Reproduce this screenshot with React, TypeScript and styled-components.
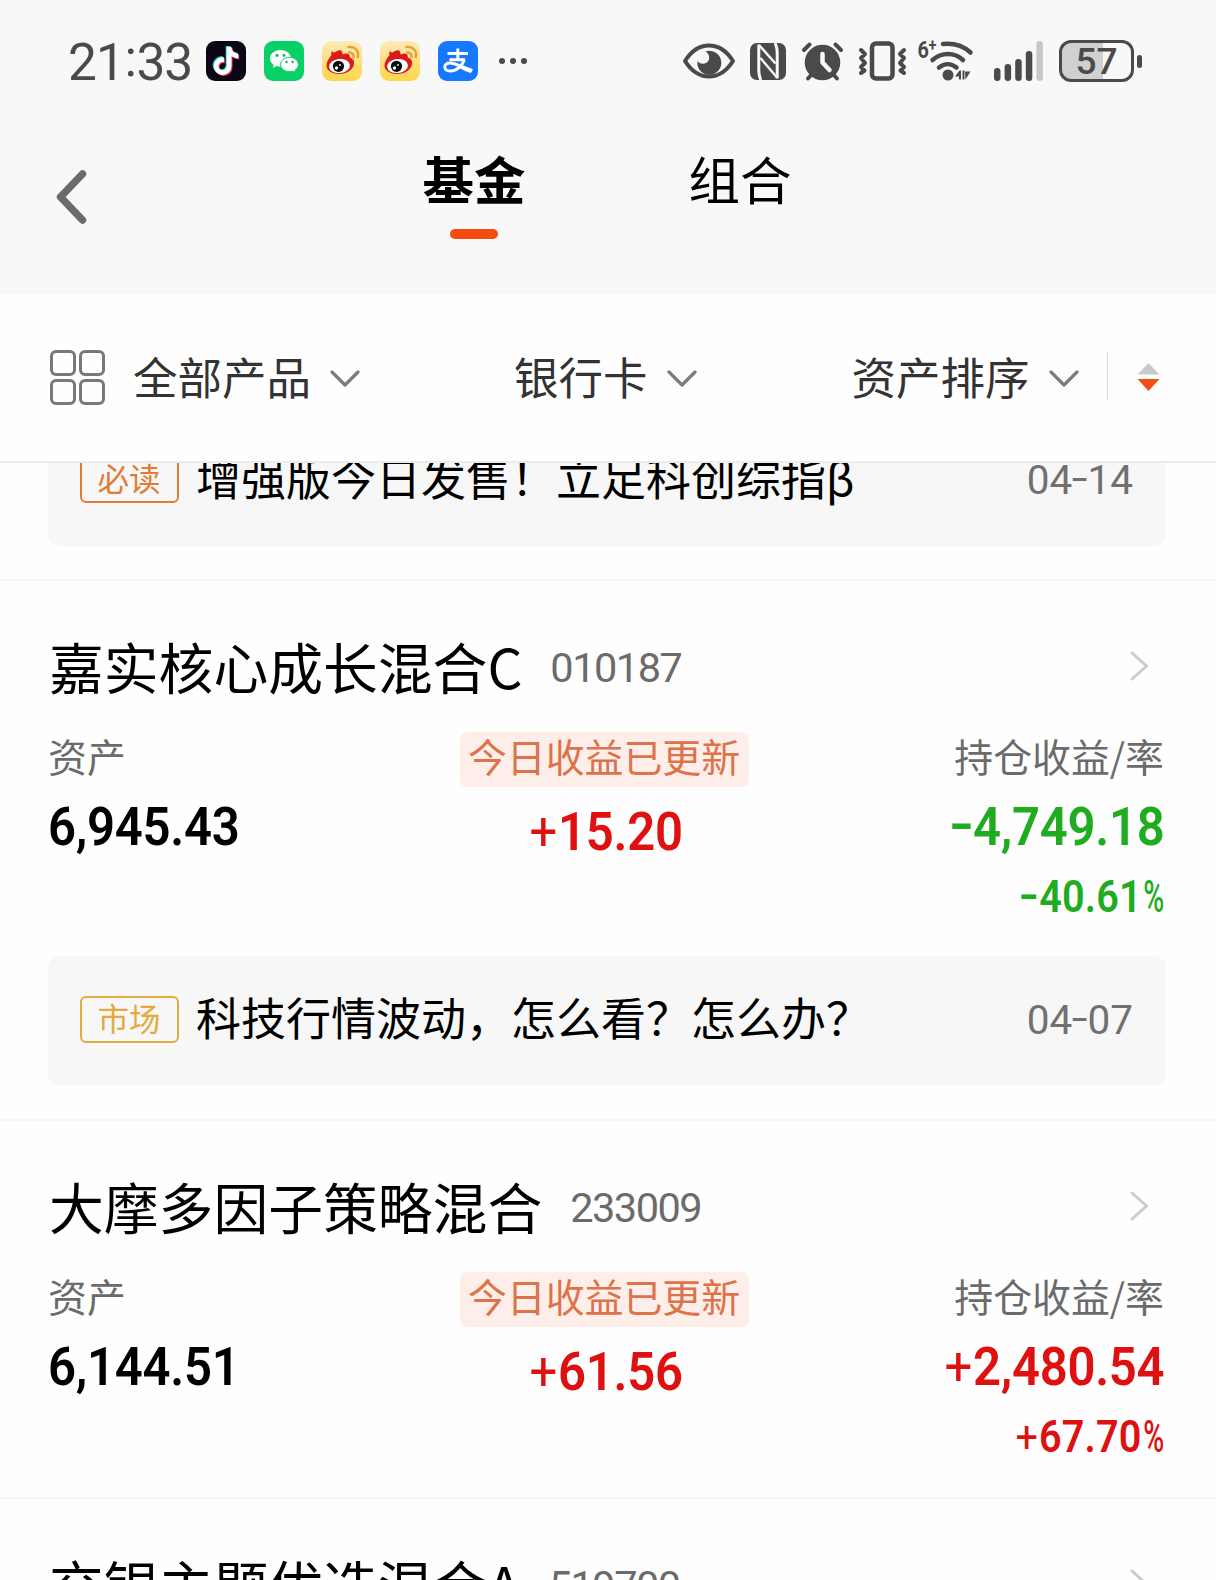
import React from 'react';
import styled, { createGlobalStyle } from 'styled-components';
import { FaTiktok } from 'react-icons/fa';

const CJK = `"Noto Sans CJK SC", sans-serif`;
const NUM = `Roboto, "Noto Sans CJK SC", sans-serif`;

const GlobalStyle = createGlobalStyle`
  * { box-sizing: border-box; }
  body { margin: 0; background: #fff; font-family: ${CJK}; }
`;

const Page = styled.div`
  width: 1216px;
  height: 1580px;
  overflow: hidden;
  background: #fefefe;
  display: flex;
  flex-direction: column;
`;

/* ---------- header ---------- */

const Header = styled.header`
  flex: none;
  height: 294px;
  background: #f8f8f8;
`;

const StatusBar = styled.div`
  height: 122px;
  padding: 0 74px 0 68px;
  display: flex;
  align-items: center;
  justify-content: space-between;
`;

const StatusGroup = styled.div`
  display: flex;
  align-items: center;
`;

const Clock = styled.div`
  width: 138px;
  font: 400 51.5px/60px ${NUM};
  letter-spacing: -1px;
  color: #4a4a4a;
  white-space: nowrap;
  padding-top: 3px;
`;

const Colon = styled.span`
  display: inline-block;
  transform: translateY(-4px);
  margin: 0 0.5px;
`;

const AppIcon = styled.div<{ $bg: string }>`
  width: 40px;
  height: 40px;
  margin-right: 18px;
  border-radius: 9px;
  background: ${(p) => p.$bg};
  display: grid;
  place-items: center;
  svg { grid-area: 1 / 1; display: block; }
`;

const Note = styled(FaTiktok)<{ $dx: number; $dy: number; $c: string }>`
  color: ${(p) => p.$c};
  transform: translate(${(p) => p.$dx}px, ${(p) => p.$dy}px);
`;

const Dots = styled.div`
  display: flex;
  gap: 5px;
  margin-left: 3px;
  i { width: 6px; height: 6px; border-radius: 50%; background: #4a4a4a; }
`;

const StatusIcon = styled.svg<{ $gap: number }>`
  display: block;
  flex: none;
  overflow: visible;
  margin-right: ${(p) => p.$gap}px;
`;

const Battery = styled.div`
  width: 75px;
  height: 42px;
  border: 3px solid #4a4a4a;
  border-radius: 12px;
  background: linear-gradient(90deg, #d0d0d0 0 41px, #f8f8f8 41px);
  font: 500 37px/38px ${NUM};
  color: #4a4a4a;
  text-align: center;
`;

const BatteryCap = styled.div`
  width: 5px;
  height: 13px;
  margin-left: 3px;
  border-radius: 3px;
  background: #4a4a4a;
`;

const NavBar = styled.nav`
  height: 172px;
  display: grid;
  grid-template-columns: 346px auto 1fr;
  padding: 20px 0 0 56px;
`;

const BackIcon = styled.svg`
  display: block;
  margin-top: 27px;
`;

const Tabs = styled.div`
  display: flex;
  gap: 162px;
  padding-left: 20px;
`;

const Tab = styled.div<{ $active?: boolean }>`
  width: 104px;
  height: 100px;
  font: ${(p) => (p.$active ? 700 : 400)} 51.5px/72px ${CJK};
  color: #000;
  text-align: center;
  white-space: nowrap;
  display: flex;
  flex-direction: column;
  align-items: center;
  &::after {
    content: '';
    width: 48px;
    height: 10px;
    margin-top: 15px;
    border-radius: 5px;
    background: ${(p) => (p.$active ? '#f44b0e' : 'transparent')};
  }
`;

/* ---------- filters ---------- */

const FilterBar = styled.div`
  flex: none;
  height: 169px;
  background: #fefefe;
  border-bottom: 2px solid #ececec;
  padding: 0 56px 0 50px;
  display: flex;
  align-items: center;
  z-index: 1;
`;

const FilterItem = styled.div<{ $gap: number }>`
  display: flex;
  align-items: center;
  margin-right: ${(p) => p.$gap}px;
`;

const FilterLabel = styled.span`
  font: 400 44.5px/60px ${CJK};
  color: #333;
  white-space: nowrap;
  margin: -3px 19px 0 0;
`;

const GridIcon = styled.div`
  display: grid;
  grid-template-columns: 26px 26px;
  grid-auto-rows: 26px;
  gap: 3px;
  margin-right: 28px;
  i { border: 3px solid #787878; border-radius: 6px; }
`;

const Divider = styled.div`
  width: 1px;
  height: 48px;
  background: #dcdcdc;
  margin: -3px 29px 0 0;
`;

const SortIcon = styled.svg`
  margin-top: -1px;
`;

/* ---------- list ---------- */

const List = styled.main`
  flex: 1;
  min-height: 0;
  overflow: hidden;
`;

const Item = styled.section<{ $scrolled?: boolean; $plain?: boolean }>`
  padding: 0 50px ${(p) => (p.$plain ? 35 : 33)}px 48px;
  border-bottom: 2px solid #f6f6f6;
  margin-top: ${(p) => (p.$scrolled ? '-47px' : '0')};
`;

const TitleRow = styled.div`
  height: 117px;
  padding: 56px 17px 0 0;
  display: flex;
  align-items: center;
  svg { margin-top: -4px; }
`;

const Name = styled.h2`
  margin: -6px 28px 0 1px;
  font: 400 54.8px/60px ${CJK};
  color: #000;
  white-space: nowrap;
`;

const Code = styled.span`
  flex: 1;
  font: 400 41.5px/60px ${NUM};
  letter-spacing: -1.5px;
  color: #6b6b6b;
`;

const Columns = styled.div`
  height: 224px;
  padding: 34px 2px 0 0;
  display: grid;
  grid-template-columns: 1fr 289px 1fr;
`;

const Column = styled.div<{ $align: string }>`
  display: flex;
  flex-direction: column;
  align-items: ${(p) => p.$align};
`;

const Label = styled.div`
  height: 55px;
  font: 400 38.9px/46px ${CJK};
  color: #6b6b6b;
  white-space: nowrap;
`;

const Updated = styled(Label)`
  width: 289px;
  margin: 0 2px 0 -2px;
  border-radius: 7px;
  background: #feeee9;
  color: #dc734b;
  text-align: center;
`;

const Amount = styled.div<{ $tone?: string; $low?: boolean; $origin?: string }>`
  font: 600 54.5px/60px ${NUM};
  letter-spacing: -0.3px;
  color: ${(p) => p.$tone || '#000'};
  margin-top: ${(p) => (p.$low ? 14 : 9)}px;
  white-space: nowrap;
  transform: scaleX(0.9);
  transform-origin: ${(p) => p.$origin || 'left'} center;
`;

const Rate = styled(Amount)`
  font-size: 44px;
  line-height: 50px;
  letter-spacing: 0.2px;
  margin-top: 16px;
`;

const Plus = styled.span`
  font-weight: 400;
  margin-right: 1px;
`;

const Minus = styled.span<{ $pad: string }>`
  display: inline-block;
  transform: scaleX(1.4) translateY(-2px);
  margin: 0 ${(p) => p.$pad};
`;

const PercentSign = styled.span`
  display: inline-block;
  font-weight: 500;
  letter-spacing: 0;
  transform: scaleX(0.72);
  transform-origin: left center;
  margin: 0 -10px 0 2px;
`;

const Notice = styled.div`
  height: 130px;
  padding: 0 33px 0 32px;
  border-radius: 12px;
  background: #f7f7f7;
  display: flex;
  align-items: center;
`;

const NoticeGap = styled.div`
  margin-top: 34px;
`;

const Tag = styled.span<{ $c: string }>`
  width: 99px;
  height: 47px;
  margin: -3px 17px 0 0;
  border: 2px solid ${(p) => p.$c};
  border-radius: 6px;
  font: 400 31.5px/38px ${CJK};
  color: ${(p) => p.$c};
  text-align: center;
  text-indent: -1px;
  white-space: nowrap;
`;

const NoticeText = styled.span`
  flex: 1;
  margin-top: -9px;
  font: 400 45px/60px ${CJK};
  color: #000;
  white-space: nowrap;
`;

const DateText = styled.span`
  font: 400 40.5px/60px ${NUM};
  color: #707070;
  margin-top: -3px;
`;

const INK = '#4a4a4a';
const RED = '#df1010';
const GREEN = '#1fac20';

const ChevronDown = () => (
  <svg width="30" height="18" viewBox="0 0 30 18" fill="none">
    <path d="M2 3 L15 16 L28 3" stroke="#7c7c7c" strokeWidth="3.2" strokeLinecap="round" strokeLinejoin="round" />
  </svg>
);

const ChevronRight = () => (
  <svg width="19" height="30" viewBox="0 0 19 30" fill="none">
    <path d="M2 2 L16.5 15 L2 28" stroke="#cbcbcb" strokeWidth="3" strokeLinecap="round" strokeLinejoin="round" />
  </svg>
);

const WeChat = () => (
  <svg width="40" height="40" viewBox="0 0 40 40">
    <path d="M16.5 9C10.5 9 6 12.700 6 17.400c0 2.700 1.500 5 3.700 6.500L8.800 27l3.700-1.900c1.300.4 2.600.6 4 .6 6 0 10.500-3.700 10.500-8.300S22.500 9 16.500 9z" fill="#fff" />
    <path d="M25.500 16.300c-5 0-9 3.200-9 7.200s4 7.200 9 7.200c1.200 0 2.300-.2 3.300-.5l3 1.500-.8-2.600c2.100-1.300 3.400-3.300 3.400-5.600 0-4-3.900-7.200-8.900-7.200z" fill="#fff" stroke="#07ce62" strokeWidth="1" />
    <g fill="#07b455">
      <circle cx="13" cy="14.500" r="1.400" /><circle cx="20" cy="14.500" r="1.400" />
      <circle cx="22.500" cy="21" r="1.200" /><circle cx="28.500" cy="21" r="1.200" />
    </g>
  </svg>
);

const Weibo = () => (
  <svg width="40" height="40" viewBox="0 0 40 40" fill="none">
    <path d="M4.500 24.500c0-4 2.500-7 5-10.500-.5-1.500-.3-3 .8-4 .5 1 1.200 1.500 2.200 1.500 1.800-1.500 3.800-2.500 5.700-2.300 2 .3 2.500 2.300 2.300 4.300 4-1.800 8-1 7.300 3 3.500 1 4.700 3.500 4.200 6.500-.8 6-7.500 10-14.500 10S4.500 30 4.500 24.500z" fill="#dc1a1c" />
    <ellipse cx="17.500" cy="25" rx="10.500" ry="7" fill="#fff" transform="rotate(-6 17.500 25)" />
    <circle cx="16.500" cy="25.300" r="5.600" fill="#0a0a0a" />
    <circle cx="14.500" cy="27" r="1.700" fill="#fff" /><circle cx="18" cy="24" r=".9" fill="#fff" />
    <path d="M27 11.500c3-.3 5 1.700 4.500 4.700M26.500 6c6.500-.7 10.700 4 9.300 10" stroke="#e2a03a" strokeWidth="2.400" strokeLinecap="round" />
  </svg>
);

const Alipay = () => (
  <svg width="40" height="40" viewBox="0 0 40 40" fill="none" stroke="#fff">
    <path d="M9.500 12.500h20.500M19.800 7.500v11.500M11.500 18.700h15.500" strokeWidth="2.900" />
    <path d="M26.500 18.500c-2 5.500-7.500 11.500-14 11.500-3.600 0-5.700-1.500-5.700-4 0-2.300 2-4 5-4 5.500 0 12 4.300 22.500 7.300" strokeWidth="2.900" />
    <path d="M23 25l11.500 3.500-1.500 3.500c-4-1-8-3-11.500-5z" fill="#fff" stroke="none" />
  </svg>
);

const Eye = () => (
  <StatusIcon $gap={15} width="52" height="36" viewBox="0 0 52 36">
    <path d="M2 18C8 8.500 16 2.500 26 2.500S44 8.500 50 18C44 27.500 36 33.500 26 33.500S8 27.500 2 18z" fill="none" stroke={INK} strokeWidth="4" strokeLinejoin="round" />
    <path d="M22.500 8.500A12 12 0 1 1 14.500 18c2.500 4 9 3.500 11-.5 1.700-3.500.3-7-3-9z" fill={INK} />
  </StatusIcon>
);

const Nfc = () => (
  <StatusIcon $gap={16} width="36" height="37" viewBox="0 0 36 37">
    <rect width="36" height="37" rx="7" fill={INK} />
    <g fill="none" stroke="#f8f8f8">
      <path d="M8.800 1.500V28c0 4 .8 6 2 9" strokeWidth="3" />
      <path d="M27.200 35.500V9c0-4-.8-6-2-9" strokeWidth="3" />
      <path d="M9 2L25.500 20.500" strokeWidth="2.400" />
      <path d="M10.500 15L27 34.500" strokeWidth="2.400" />
    </g>
  </StatusIcon>
);

const Alarm = () => (
  <StatusIcon $gap={16} width="41" height="39" viewBox="0 0 41 39" fill="none" strokeLinecap="round">
    <circle cx="20.500" cy="20.500" r="17.800" fill={INK} />
    <path d="M2 8l5.500-5.500M39 8l-5.500-5.500M6 36.500l4.500-5M35 36.500l-4.500-5" stroke={INK} strokeWidth="4" />
    <path d="M20.500 12v8.500l7 7.500" stroke="#f8f8f8" strokeWidth="4.500" strokeLinejoin="round" />
  </StatusIcon>
);

const Vibrate = () => (
  <StatusIcon $gap={12} width="47" height="40" viewBox="0 0 47 40" fill="none" stroke={INK} strokeLinecap="round" strokeLinejoin="round">
    <rect x="13" y="2.500" width="20.500" height="35" rx="4" strokeWidth="4.500" />
    <path d="M2 9l4 4-4 4 4 5-4 4 3.500 3.500L2 32M45 9l-4 4 4 4-4 5 4 4-3.500 3.500L45 32" strokeWidth="4" />
  </StatusIcon>
);

const WifiMark = styled.text`
  font: 700 23px ${NUM};
  fill: ${INK};
  tspan { font-size: 17px; }
`;

const Wifi = () => (
  <StatusIcon $gap={20} width="56" height="42" viewBox="0 0 56 42" fill="none" stroke={INK} strokeLinecap="round">
    <g transform="scale(0.86 1)">
      <WifiMark x="-.5" y="18" stroke="none">6<tspan dx="-.5" dy="-7.500">+</tspan></WifiMark>
    </g>
    <path d="M25 4c11-1 20.500 2 27.500 8.500" strokeWidth="4.500" />
    <path d="M14.500 20c9-8 22-8 30.500 0" strokeWidth="4.500" />
    <path d="M21 27.500c5.500-4.500 12-4.500 17.500 0" strokeWidth="4.500" />
    <circle cx="30" cy="35" r="5.500" fill={INK} stroke="none" />
    <path d="M37 36.500l4.500-6H43v9h-2v-3zM44.500 30.500h2v9h-2zM47 31.500h5.500l-5 8z" fill={INK} stroke="none" />
  </StatusIcon>
);

const Signal = () => (
  <StatusIcon $gap={16} width="49" height="40" viewBox="0 0 49 40" fill={INK}>
    <rect x="0" y="27" width="6.500" height="13" rx="3.200" />
    <rect x="10.600" y="23" width="6.500" height="17" rx="3.200" />
    <rect x="21.200" y="18" width="6.500" height="22" rx="3.200" />
    <rect x="31.800" y="10" width="6.500" height="30" rx="3.200" />
    <rect x="42.400" y="0" width="6.500" height="40" rx="3.200" fill="#c8c8c8" />
  </StatusIcon>
);

interface NoticeInfo { tag: string; color: string; text: string; date: string }
interface Fund {
  name: string; code: string; asset: string; today: string;
  gain: string; rate: string; tone: string; notice?: NoticeInfo;
}

const FUNDS: Fund[] = [
  {
    name: '嘉实核心成长混合C', code: '010187', asset: '6,945.43', today: '+15.20',
    gain: '-4,749.18', rate: '-40.61%', tone: GREEN,
    notice: { tag: '市场', color: '#e3aa3e', text: '科技行情波动，怎么看？怎么办？', date: '04-07' },
  },
  {
    name: '大摩多因子策略混合', code: '233009', asset: '6,144.51', today: '+61.56',
    gain: '+2,480.54', rate: '+67.70%', tone: RED,
  },
  {
    name: '交银主题优选混合A', code: '519700', asset: '', today: '', gain: '', rate: '', tone: RED,
  },
];

/* Signs and the percent mark are drawn in their own weight and width. */
const Figure = ({ value, pad = '3px' }: { value: string; pad?: string }) => (
  <>
    {value.split(/([-+%])/).filter(Boolean).map((part, i) => {
      if (part === '+') return <Plus key={i}>+</Plus>;
      if (part === '-') return <Minus key={i} $pad={pad}>-</Minus>;
      if (part === '%') return <PercentSign key={i}>%</PercentSign>;
      return <React.Fragment key={i}>{part}</React.Fragment>;
    })}
  </>
);

const NoticeCard = ({ info }: { info: NoticeInfo }) => (
  <Notice>
    <Tag $c={info.color}>{info.tag}</Tag>
    <NoticeText>{info.text}</NoticeText>
    <DateText><Figure value={info.date} pad="2px" /></DateText>
  </Notice>
);

const FundItem = ({ fund }: { fund: Fund }) => (
  <Item $plain={!fund.notice}>
    <TitleRow>
      <Name>{fund.name}</Name>
      <Code>{fund.code}</Code>
      <ChevronRight />
    </TitleRow>
    {fund.asset && (
      <Columns>
        <Column $align="flex-start">
          <Label>资产</Label>
          <Amount>{fund.asset}</Amount>
        </Column>
        <Column $align="center">
          <Updated>今日收益已更新</Updated>
          <Amount $tone={RED} $low $origin="center"><Figure value={fund.today} /></Amount>
        </Column>
        <Column $align="flex-end">
          <Label>持仓收益/率</Label>
          <Amount $tone={fund.tone} $origin="right"><Figure value={fund.gain} /></Amount>
          <Rate $tone={fund.tone} $origin="right"><Figure value={fund.rate} /></Rate>
        </Column>
      </Columns>
    )}
    {fund.notice && <NoticeGap><NoticeCard info={fund.notice} /></NoticeGap>}
  </Item>
);

export default function App() {
  return (
    <Page>
      <GlobalStyle />
      <Header>
        <StatusBar>
          <StatusGroup>
            <Clock>21<Colon>:</Colon>33</Clock>
            <AppIcon $bg="#0b0716">
              <Note size={28} $dx={-1} $dy={-1} $c="#2ee6e0" />
              <Note size={28} $dx={1} $dy={1} $c="#f2385c" />
              <Note size={28} $dx={0} $dy={0} $c="#fff" />
            </AppIcon>
            <AppIcon $bg="#07d166"><WeChat /></AppIcon>
            <AppIcon $bg="linear-gradient(#fdeab8, #fdd548)"><Weibo /></AppIcon>
            <AppIcon $bg="linear-gradient(#fdeab8, #fdd548)"><Weibo /></AppIcon>
            <AppIcon $bg="#1677ff"><Alipay /></AppIcon>
            <Dots><i /><i /><i /></Dots>
          </StatusGroup>
          <StatusGroup>
            <Eye /><Nfc /><Alarm /><Vibrate /><Wifi /><Signal />
            <Battery>57</Battery>
            <BatteryCap />
          </StatusGroup>
        </StatusBar>
        <NavBar>
          <BackIcon width="32" height="56" viewBox="0 0 32 56" fill="none">
            <path d="M26.500 5 L4.500 28 L26.500 51" stroke="#6b6b6b" strokeWidth="7.500" strokeLinecap="round" strokeLinejoin="round" />
          </BackIcon>
          <Tabs>
            <Tab $active>基金</Tab>
            <Tab>组合</Tab>
          </Tabs>
        </NavBar>
      </Header>

      <FilterBar>
        <GridIcon><i /><i /><i /><i /></GridIcon>
        <FilterItem $gap={154}><FilterLabel>全部产品</FilterLabel><ChevronDown /></FilterItem>
        <FilterItem $gap={155}><FilterLabel>银行卡</FilterLabel><ChevronDown /></FilterItem>
        <FilterItem $gap={28}><FilterLabel>资产排序</FilterLabel><ChevronDown /></FilterItem>
        <Divider />
        <SortIcon width="23" height="28" viewBox="0 0 23 28">
          <path d="M11.500 0 L22.500 11.500 H.5z" fill="#cacaca" />
          <path d="M.5 16 H22.500 L11.500 28z" fill="#f04e12" />
        </SortIcon>
      </FilterBar>

      <List>
        <Item $scrolled>
          <NoticeCard info={{ tag: '必读', color: '#e07c33', text: '增强版今日发售！立足科创综指β', date: '04-14' }} />
        </Item>
        {FUNDS.map((f) => <FundItem key={f.code} fund={f} />)}
      </List>
    </Page>
  );
}
